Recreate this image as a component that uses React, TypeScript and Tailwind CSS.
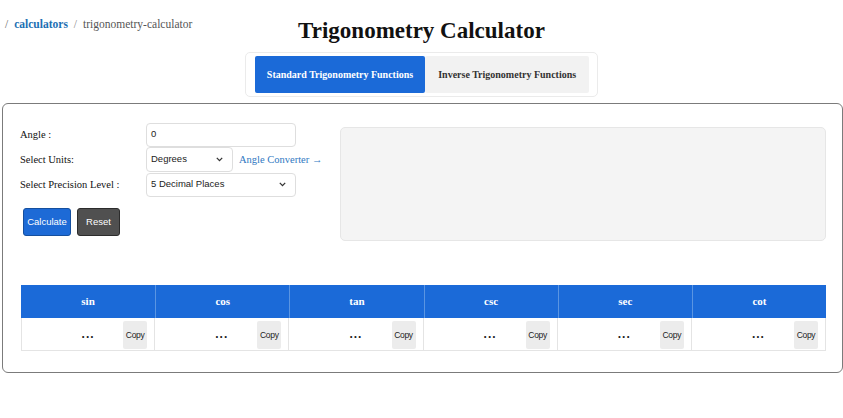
import React from "react";

const FUNCS = ["sin", "cos", "tan", "csc", "sec", "cot"];

function Chevron() {
  return (
    <svg width="7" height="5" viewBox="0 0 7 5" className="shrink-0">
      <path d="M0.8 0.9 L3.5 3.6 L6.2 0.9" fill="none" stroke="#333" strokeWidth="1.3" />
    </svg>
  );
}

function FakeSelect({ value, width }: { value: string; width: string }) {
  return (
    <div
      className={`${width} flex h-full items-center justify-between rounded-[4px] border border-[#dedede] bg-white pl-[4px] pr-[9px] font-['Liberation_Sans',Arial,sans-serif] text-[9.5px] text-[#222]`}
    >
      <span>{value}</span>
      <Chevron />
    </div>
  );
}

function ResultCell({ first }: { first?: boolean }) {
  return (
    <div
      className={`relative flex h-[33px] items-center justify-center border-b border-[#e4e4e4] ${first ? "border-l" : ""} border-r`}
    >
      <span className="font-['Liberation_Sans',Arial,sans-serif] text-[12px] font-bold tracking-[1px] text-[#222]">...</span>
      <button className="absolute right-[7px] top-[3px] flex h-[28px] w-[24px] items-center justify-center rounded-[2px] bg-[#ececec] font-['Liberation_Sans',Arial,sans-serif] text-[8.5px] tracking-[-0.3px] text-[#222]">
        Copy
      </button>
    </div>
  );
}

export default function App() {
  return (
    <div className="min-h-[418px] w-[843px] bg-white font-['Liberation_Serif','Times_New_Roman',serif] text-[#111]">
      <div className="grid items-start pt-[15px]">
        <div className="col-start-1 row-start-1 mt-[1px] justify-self-start pl-[5px] text-[11.5px] leading-[16px] text-[#666]">
          <span>/</span>
          <span className="ml-[6px] font-bold text-[#1d6fb3]">calculators</span>
          <span className="ml-[6px] text-[#888]">/</span>
          <span className="ml-[6px] text-[#555]">trigonometry-calculator</span>
        </div>
        <h1 className="col-start-1 row-start-1 mt-[2px] justify-self-center text-[23px] font-bold leading-[28px] text-[#111]">
          Trigonometry Calculator
        </h1>
      </div>

      <div className="mt-[7px] flex justify-center">
        <div className="flex rounded-[5px] border border-[#ebebeb] bg-white px-[9px] py-[3px] pr-[8px]">
          <button className="h-[37px] rounded-[2px] bg-[#1b6ad8] px-[12px] text-[10px] font-bold text-white">
            Standard Trigonometry Functions
          </button>
          <button className="h-[37px] rounded-[2px] bg-[#f2f2f2] px-[13px] text-[10px] font-bold text-[#333]">
            Inverse Trigonometry Functions
          </button>
        </div>
      </div>

      <div className="ml-[2px] mt-[6px] h-[270px] w-[841px] rounded-[6px] border border-[#7b7b7b] pl-[17px] pr-[16px] pt-[18px]">
        <div className="flex">
          <div className="w-[320px] shrink-0">
            <div className="grid grid-cols-[126px_auto] text-[10.5px] text-[#111]">
              <div className="flex h-[25px] items-center">Angle :</div>
              <div className="flex h-[25px] items-center">
                <div className="flex h-[24px] w-[150px] items-center rounded-[4px] border border-[#dedede] pl-[4px] font-['Liberation_Sans',Arial,sans-serif] text-[9.5px] text-[#222]">
                  0
                </div>
              </div>
              <div className="flex h-[25px] items-center">Select Units:</div>
              <div className="flex h-[25px] items-center">
                <FakeSelect value="Degrees" width="w-[87px]" />
                <span className="ml-[6px] text-[10.5px] text-[#2f78c2]">Angle Converter →</span>
              </div>
              <div className="flex h-[25px] items-center">Select Precision Level :</div>
              <div className="flex h-[25px] items-center py-[0.5px]">
                <FakeSelect value="5 Decimal Places" width="w-[150px]" />
              </div>
            </div>
            <div className="ml-[3px] mt-[11px] flex gap-[6px] font-['Liberation_Sans',Arial,sans-serif] text-[9.5px]">
              <button className="h-[28px] w-[48px] rounded-[3px] border border-[#154f9e] bg-[#1d6ad6] text-white">
                Calculate
              </button>
              <button className="h-[28px] w-[43px] rounded-[3px] border border-[#2c2c2c] bg-[#505050] text-white">
                Reset
              </button>
            </div>
          </div>
          <div className="mt-[5px] h-[114px] flex-1 rounded-[5px] border border-[#e6e6e6] bg-[#f4f4f4]" />
        </div>

        <div className="ml-[1px] mt-[44px] grid grid-cols-6">
          {FUNCS.map((f, i) => (
            <div
              key={f}
              className={`flex h-[33px] items-center justify-center bg-[#1b6ad8] text-[11px] font-bold text-white ${i > 0 ? "border-l border-[#5a95e2]" : ""}`}
            >
              {f}
            </div>
          ))}
          {FUNCS.map((f, i) => (
            <ResultCell key={f} first={i === 0} />
          ))}
        </div>
      </div>
    </div>
  );
}
